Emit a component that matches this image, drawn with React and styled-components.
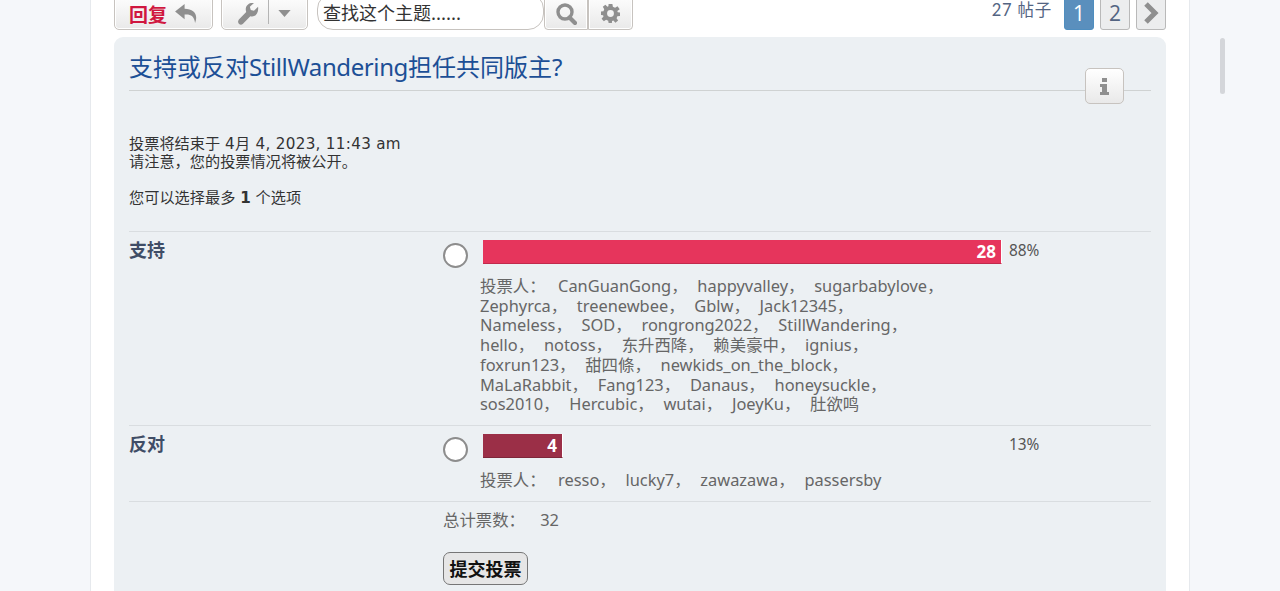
import React from "react";
import styled, { createGlobalStyle } from "styled-components";

const Global = createGlobalStyle`
  html, body { margin: 0; padding: 0; height: 591px; overflow: hidden; background: #f5f7fa; }
  body { font-family: "DejaVu Sans", "Noto Sans CJK SC", sans-serif; }
`;
const Page = styled.div`
  position: relative;
  height: 591px;
  overflow: hidden;
`;
const Wrap = styled.div`
  box-sizing: border-box;
  width: 1100px;
  margin: 0 0 0 90px;
  height: 700px;
  background: #fff;
  border-left: 1px solid #e6e9ed;
  border-right: 1px solid #e6e9ed;
  padding: 0 23px;
`;
const Thumb = styled.div`
  position: absolute;
  left: 1220px;
  top: 38px;
  width: 5px;
  height: 56px;
  border-radius: 3px;
  background: #d4d6da;
`;
const Toolbar = styled.div`
  display: flex;
  align-items: flex-start;
  height: 37px;
  margin: -7px 0 7px;
`;
const Btn = styled.div`
  box-sizing: border-box;
  height: 37px;
  display: flex;
  align-items: center;
  justify-content: center;
  padding-top: 4px;
  gap: ${(p) => p.$gap || 0}px;
  width: ${(p) => p.$w}px;
  margin-left: ${(p) => p.$ml || 0}px;
  border: 1px solid #c7c3bf;
  border-radius: ${(p) => p.$r || "5px"};
  background: linear-gradient(#fff, #e9e9e9);
  box-shadow: 0 0 0 1px #fff inset;
  color: #8f8f8f;
`;
const ReplyText = styled.span`
  font-family: "Noto Sans CJK SC", sans-serif;
  font-size: 19px;
  line-height: 24px;
  font-weight: 700;
  color: #d0173f;
`;
const Sep = styled.span`
  width: 1px;
  height: 25px;
  margin-top: -4px;
  background: #b4b4b4;
`;
const SearchInput = styled.div`
  box-sizing: border-box;
  width: 227px;
  height: 37px;
  margin-left: 9px;
  padding: 6px 0 0 5px;
  border: 1px solid #c7c3bf;
  border-radius: 16px;
  background: #fff;
  font-family: "Noto Sans CJK SC", sans-serif;
  font-size: 18px;
  line-height: 24px;
  color: #333;
`;
const Spacer = styled.div`
  flex: 1;
`;
const Count = styled.span`
  font-family: "Lato", "Noto Sans CJK SC", sans-serif;
  font-size: 16.5px;
  line-height: 20px;
  margin-top: 7px;
  letter-spacing: 0.8px;
  color: #536482;
  margin-right: 12px;
`;
const PageBtn = styled.div`
  box-sizing: border-box;
  width: 30px;
  height: 37px;
  margin-left: ${(p) => p.$ml}px;
  padding-top: 3px;
  display: flex;
  align-items: center;
  justify-content: center;
  border-radius: 3px;
  border: 1px solid ${(p) => (p.$active ? "#4f8ebf" : "#b9b9b9")};
  background: ${(p) => (p.$active ? "#5a8fbd" : "#ecedee")};
  color: ${(p) => (p.$active ? "#fff" : "#536482")};
  font-family: "Open Sans", sans-serif;
  font-size: 21px;
  line-height: 24px;
`;
const Panel = styled.section`
  position: relative;
  box-sizing: border-box;
  height: 640px;
  padding: 0 15px;
  border-radius: 9px;
  background: #ecf0f3;
`;
const Title = styled.h3`
  margin: 0;
  padding-top: 14px;
  height: 54px;
  box-sizing: border-box;
  border-bottom: 1px solid #cfd2d2;
  font-family: "Noto Sans", "Noto Sans CJK SC", sans-serif;
  font-weight: 400;
  font-size: 24px;
  line-height: 32px;
  color: #1c4f96;
`;
const TitleLatin = styled.span`
  letter-spacing: -0.4px;
`;
const InfoBtn = styled.div`
  position: absolute;
  right: 42px;
  top: 31px;
  box-sizing: border-box;
  width: 39px;
  height: 36px;
  display: flex;
  align-items: center;
  justify-content: center;
  border: 1px solid #c7c3bf;
  border-radius: 5px;
  background: linear-gradient(#fff, #e9e9e9);
`;
const Info = styled.div`
  margin-top: 44px;
  color: #333;
  font-family: "DejaVu Sans", "Noto Sans CJK SC", sans-serif;
`;
const InfoLine = styled.div`
  font-size: 15.2px;
  margin-top: ${(p) => p.$mt || 0}px;
  line-height: 18px;
`;
const Date = styled.span`
  letter-spacing: 0.3px;
`;
const Row = styled.div`
  display: grid;
  grid-template-columns: 314px 1fr;
  border-top: 1px solid #d9dde0;
  margin-top: ${(p) => p.$mt || 0}px;
  padding-top: ${(p) => p.$pt}px;
  height: ${(p) => p.$h}px;
  box-sizing: border-box;
`;
const Label = styled.div`
  font-family: "Noto Sans CJK SC", sans-serif;
  font-weight: 700;
  font-size: 18px;
  line-height: 24px;
  color: #3f4d66;
  margin-top: -3px;
`;
const OptionCol = styled.div`
  display: grid;
  grid-template-columns: 40px 519px 1fr;
  grid-template-rows: auto auto;
  position: relative;
`;
const Radio = styled.div`
  box-sizing: border-box;
  width: 25px;
  height: 25px;
  margin-top: 3px;
  border: 2px solid #8d8d8d;
  border-radius: 50%;
  background: #fff;
`;
const BarTrack = styled.div`
  height: 24px;
`;
const Bar = styled.div`
  box-sizing: border-box;
  height: 24px;
  border: 1px solid #fff;
  border-width: 0 1px 1px 0;
  border-bottom-color: ${(p) => p.$edge};
  background: ${(p) => p.$bg};
  color: #fff;
  font-family: "Noto Sans", sans-serif;
  font-weight: 700;
  font-size: 17px;
  line-height: 24px;
  text-align: right;
  padding-right: 5px;
`;
const Percent = styled.div`
  font-family: "Noto Sans", sans-serif;
  font-size: 15.4px;
  line-height: 20px;
  color: #555;
  padding: 1px 0 0 7px;
`;
const Voters = styled.div`
  grid-column: 2 / 4;
  margin: ${(p) => p.$mt}px 0 0 -3px;
  width: 510px;
  font-family: "Noto Sans", "Noto Sans CJK SC", sans-serif;
  font-size: 16.4px;
  line-height: 19.8px;
  word-spacing: 5.5px;
  color: #666;
  white-space: pre;
`;
const Total = styled.div`
  font-family: "Noto Sans", "Noto Sans CJK SC", sans-serif;
  font-size: 16.4px;
  line-height: 20px;
  word-spacing: 11px;
  color: #666;
  white-space: pre;
  padding-top: 8px;
`;
const Submit = styled.div`
  box-sizing: border-box;
  width: 85px;
  height: 33px;
  margin-top: 22px;
  border: 1px solid #767676;
  border-radius: 7px;
  background: #e6e6e6;
  font-family: "Noto Sans CJK SC", sans-serif;
  font-weight: 700;
  font-size: 18px;
  line-height: 31px;
  text-align: center;
  color: #111;
`;
const Sum = styled.div`
  display: grid;
  grid-template-columns: 314px 1fr;
  border-top: 1px solid #d9dde0;
`;

const Icon = ({ w, h, vb, d, c = "#8f8f8f" }) => (
  <svg width={w} height={h} viewBox={vb} fill={c}><path d={d} /></svg>
);
const Reply = () => <Icon w={23} h={20} vb="0 0 24 21" d="M10 0 L0 8 L10 16 L10 11 C16 10.5 20 12 21 20 C24.5 11 20 5.2 10 5 Z" />;
const Wrench = () => <Icon w={21} h={22} vb="0 0 23 24" d="M22 4 L17.5 8.5 L14 7.5 L13 4 L17.5 0 C13 -1 8.5 2 8.5 7 C8.5 8 8.7 9 9 9.8 L1 18 C-0.5 20 0 22 1.2 23 C2.5 24 4 24 5.5 22.8 L13.5 14.5 C18 16 23 12 22 4 Z" />;
const Caret = () => <Icon w={13} h={7} vb="0 0 14 8" d="M0 0 H14 L7 8 Z" />;
const Search = () => (
  <svg width="21" height="22" viewBox="0 0 21 22" fill="none" stroke="#8f8f8f">
    <circle cx="9" cy="9" r="7" strokeWidth="3.4" />
    <path d="M13.5 14.5 L19 20" strokeWidth="4.2" strokeLinecap="round" />
  </svg>
);
const Gear = () => (
  <svg width="19" height="19" viewBox="0 0 20 20">
    <path fill="#8f8f8f" fillRule="evenodd" d="M8 0 H12 L12.5 3 L14.8 4 L17.4 2.3 L19.7 5.4 L17.2 7.4 L17.6 8.7 L20 9 V12.5 L17.2 13 L16.4 15 L18 17.4 L15.2 19.7 L13 17.4 L11.6 18 L11.5 20 H8 L7.6 17.6 L5.4 16.6 L3 18.2 L0.6 15.4 L2.6 13.2 L2.2 11.8 L0 11.5 V8 L2.6 7.6 L3.4 5.4 L1.9 3 L4.6 0.8 L6.8 2.8 L7.8 2.4 Z M10 6.4 A3.6 3.6 0 1 0 10 13.6 A3.6 3.6 0 1 0 10 6.4 Z" />
  </svg>
);
const Chevron = () => (
  <svg width="16" height="22" viewBox="0 0 16 22" fill="none" stroke="#8f8f8f" strokeWidth="5"><path d="M3 2 L12 11 L3 20" /></svg>
);
const InfoIcon = () => <Icon w={9} h={17} vb="0 0 9 17" d="M2 0 H7 V4 H2 Z M0 6 H7 V14 H9 V17 H0 V14 H2 V9 H0 Z" />;

const voters1 = `投票人：\u2009 CanGuanGong， happyvalley， sugarbabylove，
Zephyrca， treenewbee， Gblw， Jack12345，
Nameless， SOD， rongrong2022， StillWandering，
hello， notoss， 东升西降， 赖美豪中， ignius，
foxrun123， 甜四條， newkids_on_the_block，
MaLaRabbit， Fang123， Danaus， honeysuckle，
sos2010， Hercubic， wutai， JoeyKu， 肚欲鸣`;

export default function App() {
  return (
    <Page>
      <Global />
      <Wrap>
        <Toolbar>
          <Btn $w={99} $gap={8}><ReplyText>回复</ReplyText><Reply /></Btn>
          <Btn $w={87} $ml={8} $gap={9}><Wrench /><Sep /><Caret /></Btn>
          <SearchInput>查找这个主题......</SearchInput>
          <Btn $w={44} $r="0 0 0 4px"><Search /></Btn>
          <Btn $w={45} $r="0 0 4px 0"><Gear /></Btn>
          <Spacer />
          <Count>27 帖子</Count>
          <PageBtn $active $ml={0}>1</PageBtn>
          <PageBtn $ml={6}>2</PageBtn>
          <PageBtn $ml={6}><Chevron /></PageBtn>
        </Toolbar>
        <Panel>
          <Title>支持或反对<TitleLatin>StillWandering</TitleLatin>担任共同版主?</Title>
          <InfoBtn><InfoIcon /></InfoBtn>
          <Info>
            <InfoLine>投票将结束于 <Date>4月 4, 2023, 11:43 am</Date></InfoLine>
            <InfoLine>请注意，您的投票情况将被公开。</InfoLine>
            <InfoLine $mt={18}>您可以选择最多 <b>1</b> 个选项</InfoLine>
          </Info>
          <Row $mt={24} $pt={8} $h={194}>
            <Label>支持</Label>
            <OptionCol>
              <Radio />
              <BarTrack><Bar $bg="#e6355c" $edge="#c12a4c">28</Bar></BarTrack>
              <Percent>88%</Percent>
              <div />
              <Voters $mt={-3}>{voters1}</Voters>
            </OptionCol>
          </Row>
          <Row $pt={8} $h={76}>
            <Label>反对</Label>
            <OptionCol>
              <Radio />
              <BarTrack><Bar $bg="#9b2f47" $edge="#7d2639" style={{ width: 80 }}>4</Bar></BarTrack>
              <Percent>13%</Percent>
              <div />
              <Voters $mt={-4}>{"投票人：\u2009 resso， lucky7， zawazawa， passersby"}</Voters>
            </OptionCol>
          </Row>
          <Sum>
            <div />
            <div>
              <Total>总计票数： 32</Total>
              <Submit>提交投票</Submit>
            </div>
          </Sum>
        </Panel>
      </Wrap>
      <Thumb />
    </Page>
  );
}
